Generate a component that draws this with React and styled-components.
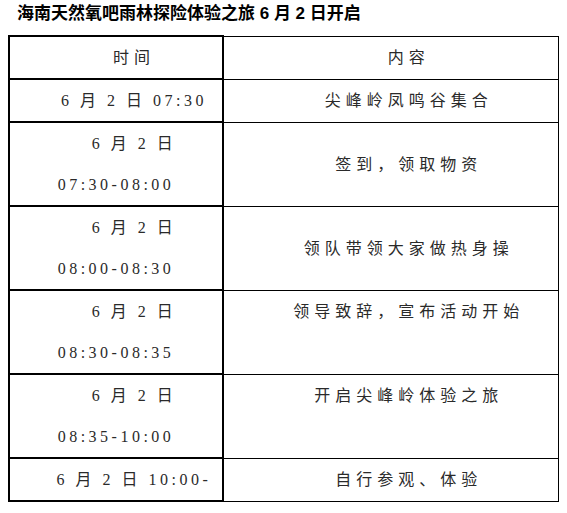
import React from 'react';
import styled, { createGlobalStyle } from 'styled-components';

const Global = createGlobalStyle`
body {
  margin: 0;
  background: #fff;
}
`

const Page = styled.div`
padding: 4px 10px 0 8px;
`

const Title = styled.h1`
margin: 0 0 11px 9px;
font-family: "Liberation Sans", "Noto Sans CJK SC", sans-serif;
font-size: 17px;
line-height: 20px;
font-weight: bold;
color: #000;
white-space: nowrap;
`

const Table = styled.table`
border-collapse: collapse;
width: 549px;
table-layout: fixed;
font-family: "Liberation Serif", "Noto Sans CJK SC", serif;
font-size: 16px;
color: #2a2a2a;
`

const Row = styled.tr`
height: ${p => p.tall ? '84px' : p.head ? '41px' : '42px'};
`

const TimeCell = styled.td`
border: 2px solid #000;
padding: 0;
text-align: center;
text-indent: 36px;
vertical-align: ${p => p.head ? 'middle' : 'top'};
line-height: 41px;
letter-spacing: ${p => p.head ? '5px' : '3.5px'};
white-space: nowrap;
`

const ContentCell = styled.td`
border: 1px solid #000;
border-left: 2px solid #000;
padding: 0;
text-align: center;
text-indent: 36px;
vertical-align: ${p => p.top ? 'top' : 'middle'};
line-height: 41px;
letter-spacing: 5px;
white-space: nowrap;
`

const rows = [
  { time: ['6 月 2 日 07:30'], what: '尖峰岭凤鸣谷集合' },
  { time: ['6 月 2 日', '07:30-08:00'], what: '签到，领取物资' },
  { time: ['6 月 2 日', '08:00-08:30'], what: '领队带领大家做热身操' },
  { time: ['6 月 2 日', '08:30-08:35'], what: '领导致辞，宣布活动开始', top: true },
  { time: ['6 月 2 日', '08:35-10:00'], what: '开启尖峰岭体验之旅', top: true },
  { time: ['6 月 2 日 10:00-'], what: '自行参观、体验' },
]

const App = () => {
  return (
    <Page>
      <Global />
      <Title>海南天然氧吧雨林探险体验之旅 6 月 2 日开启</Title>
      <Table>
        <colgroup>
          <col style={{ width: 214 }} />
          <col style={{ width: 335 }} />
        </colgroup>
        <tbody>
          <Row head>
            <TimeCell head>时间</TimeCell>
            <ContentCell>内容</ContentCell>
          </Row>
          {rows.map((r, i) => (
            <Row key={i} tall={r.time.length > 1}>
              <TimeCell>
                {r.time.map((t, j) => (
                  <React.Fragment key={j}>
                    {j > 0 && <br />}
                    {t}
                  </React.Fragment>
                ))}
              </TimeCell>
              <ContentCell top={r.top}>{r.what}</ContentCell>
            </Row>
          ))}
        </tbody>
      </Table>
    </Page>
  )
}

export default App;
